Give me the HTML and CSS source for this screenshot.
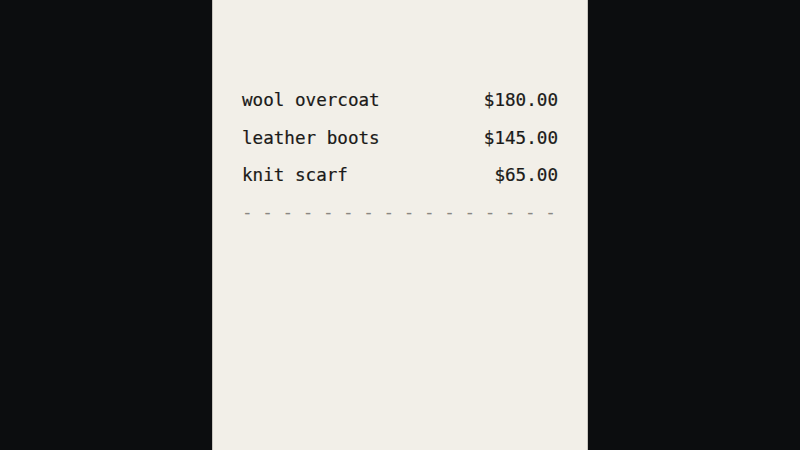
FILE: index.html
```html
<!DOCTYPE html>
<html>
<head>
<meta charset="utf-8">
<link rel="stylesheet" href="styles.css">
</head>
<body>
<div class="stage">
  <div class="receipt">
    <div class="row"><span>wool overcoat</span><span>$180.00</span></div>
    <div class="row"><span>leather boots</span><span>$145.00</span></div>
    <div class="row"><span>knit scarf</span><span>$65.00</span></div>
    <div class="rule"><span>-</span><span>-</span><span>-</span><span>-</span><span>-</span><span>-</span><span>-</span><span>-</span><span>-</span><span>-</span><span>-</span><span>-</span><span>-</span><span>-</span><span>-</span><span>-</span></div>
  </div>
</div>
</body>
</html>
```
FILE: styles.css
```css
html, body {
  margin: 0;
  padding: 0;
  background: #0c0d0f;
}
.stage {
  width: 800px;
  height: 450px;
  display: flex;
  justify-content: center;
}
.receipt {
  width: 376px;
  height: 450px;
  box-sizing: border-box;
  background: #f2efe8;
  border-left: 1px solid #c9c6bf;
  border-right: 1px solid #c9c6bf;
  padding: 82px 29px 0 29px;
  font-family: "DejaVu Sans Mono", "Liberation Mono", monospace;
  font-size: 17.6px;
  color: #1b1a18;
  -webkit-text-stroke: 0.2px #1b1a18;
}
.row {
  display: flex;
  justify-content: space-between;
  height: 37.5px;
  line-height: 37.5px;
}
.rule {
  display: flex;
  justify-content: space-between;
  height: 37.5px;
  line-height: 35.5px;
  color: #8a8782;
  -webkit-text-stroke: 0;
  padding-right: 2px;
}
```
